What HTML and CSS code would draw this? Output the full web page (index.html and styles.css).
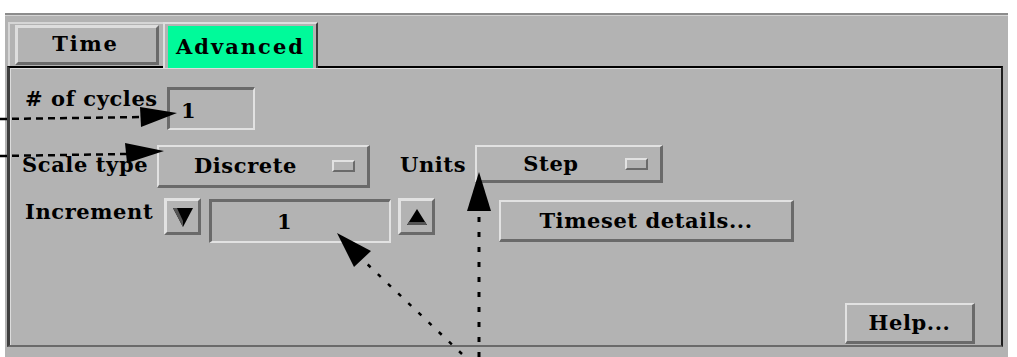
FILE: index.html
```html
<!DOCTYPE html>
<html lang="en">
<head>
  <meta charset="UTF-8" />
  <title>Time options - Advanced</title>
  <link rel="stylesheet" href="styles.css">
</head>
<body>

  <!-- Dialog window -->
  <div class="window">
    <div class="tabbar">
      <div class="tabs-frame">
        <div class="tab">Time</div>
      </div>
      <div class="tab-active"><span>Advanced</span></div>
    </div>

    <div class="panel">
      <div class="row row-cycles">
        <span class="label label-cycles"># of cycles</span>
        <div class="field field-cycles">1</div>
      </div>

      <div class="row row-scale">
        <span class="label label-scale">Scale type</span>
        <div class="option option-scale">
          <span class="option-text">Discrete</span>
          <span class="indicator"></span>
        </div>
        <span class="label label-units">Units</span>
        <div class="option option-units">
          <span class="option-text">Step</span>
          <span class="indicator"></span>
        </div>
      </div>

      <div class="row row-inc">
        <span class="label label-inc">Increment</span>
        <div class="arrow-btn">
          <svg width="22" height="22" viewBox="0 0 22 22">
            <polygon points="1,2 21,2 11,21" fill="#000" />
            <polygon points="1,2 5,2 11,15 11,21" fill="#555" />
          </svg>
        </div>
        <div class="field field-inc">1</div>
        <div class="arrow-btn arrow-up">
          <svg width="22" height="22" viewBox="0 0 22 22">
            <polygon points="11,3 21,19 1,19" fill="#000" />
            <polygon points="1,19 21,19 19,16 3,16" fill="#555" />
          </svg>
        </div>
        <div class="btn btn-timeset">Timeset details...</div>
      </div>

      <div class="footer">
        <div class="btn btn-help">Help...</div>
      </div>
    </div>
  </div>

  <!-- Callout arrows drawn over the dialog -->
  <svg class="callouts" width="1017" height="357" viewBox="0 0 1017 357">
    <g stroke="#000" fill="none">
      <line x1="0" y1="119" x2="142" y2="117" stroke-width="2.5" stroke-dasharray="7 5" />
      <line x1="0" y1="156" x2="127" y2="154" stroke-width="2.5" stroke-dasharray="7 5" />
      <line x1="479" y1="357" x2="479" y2="211" stroke-width="3" stroke-dasharray="5 10" />
      <line x1="462" y1="354" x2="364" y2="261" stroke-width="2.5" stroke-dasharray="4 10" />
    </g>
    <g fill="#000">
      <polygon points="140,107 177,113 141,127" />
      <polygon points="125,143 164,151 127,163" />
      <polygon points="479,172 491,211 467,211" />
      <polygon points="337,233 371,251 354,267" />
    </g>
  </svg>

</body>
</html>
```

FILE: styles.css
```css
body {
  margin: 0;
  background: #fff;
  font-family: "DejaVu Serif", serif;
  font-weight: bold;
  font-size: 21px;
  line-height: 24px;
  letter-spacing: 0.6px;
  color: #000;
  position: relative;
  width: 1017px;
  height: 357px;
  overflow: hidden;
}

/* Window */
.window {
  margin: 13px 0 0 5px;
  width: 1003px;
  height: 344px;
  box-sizing: border-box;
  background: #b3b3b3;
  border-top: 2px solid #8c8c8c;
  box-shadow: inset 0 1px #d4d4d4;
  display: flex;
  flex-direction: column;
}

/* Tabs */
.tabbar {
  display: flex;
  align-items: flex-end;
  padding: 7px 0 0 3px;
}

.tabs-frame {
  height: 44px;
  width: 155px;
  box-sizing: border-box;
  border-top: 2px solid #d6d6d6;
  border-left: 2px solid #d6d6d6;
  padding: 1px 0 0 5px;
}

.tab {
  width: 144px;
  height: 40px;
  box-sizing: border-box;
  border-style: solid;
  border-width: 3px;
  border-color: #dedede #6a6a6a #6a6a6a #dedede;
  display: flex;
  align-items: center;
  justify-content: center;
  padding: 0 3px 2px 0;
  letter-spacing: 1.8px;
}

.tab-active {
  width: 155px;
  height: 46px;
  margin-bottom: -2px;
  box-sizing: border-box;
  border-style: solid;
  border-width: 2px 2px 0 2px;
  border-color: #dedede #3c3c3c #dedede #dedede;
  padding: 2px 3px 0 3px;
  position: relative;
  z-index: 1;
  background: #b3b3b3;
  letter-spacing: 2px;
}

.tab-active span {
  display: flex;
  align-items: center;
  justify-content: center;
  height: 100%;
  padding-bottom: 1px;
  box-sizing: border-box;
  background: #00fa9a;
}

/* Panel */
.panel {
  margin-left: 2px;
  width: 996px;
  height: 281px;
  box-sizing: border-box;
  border-style: solid;
  border-width: 2px 2px 2px 3px;
  border-color: #000 #1e1e1e #6a6a6a #3e3e3e;
  box-shadow: inset 1px 1px #dcdcdc;
  padding: 19px 0 0 15px;
  display: flex;
  flex-direction: column;
}

.row {
  display: flex;
  align-items: flex-start;
}

.label {
  white-space: nowrap;
}

.label-cycles { width: 142px; margin-top: 0; }
.label-scale { width: 135px; margin: 8px 0 0 -3px; }
.label-units { width: 75px; margin: 8px 0 0 30px; }
.label-inc { width: 139px; margin-top: 2px; }

/* Sunken text fields */
.field {
  box-sizing: border-box;
  border-style: solid;
  border-width: 3px 2px 2px 3px;
  border-color: #6a6a6a #e2e2e2 #e2e2e2 #6a6a6a;
  display: flex;
  align-items: center;
}

.field-cycles {
  width: 88px;
  height: 43px;
  padding: 4px 0 0 11px;
}

.row-scale { margin-top: 15px; }
.row-inc { margin-top: 10px; }

.field-inc {
  width: 182px;
  height: 44px;
  margin: 1px 0 0 8px;
  justify-content: center;
  padding-right: 32px;
}

/* Raised widgets */
.option, .btn, .arrow-btn {
  box-sizing: border-box;
  border-style: solid;
  border-width: 2px 3px 3px 2px;
  border-color: #e2e2e2 #6a6a6a #6a6a6a #e2e2e2;
  display: flex;
  align-items: center;
}

.option-scale { width: 213px; height: 43px; }
.option-units { width: 188px; height: 38px; }

.option-text {
  flex: 1;
  text-align: center;
}

.indicator {
  width: 23px;
  height: 12px;
  box-sizing: border-box;
  border-style: solid;
  border-width: 2px;
  border-color: #e2e2e2 #6a6a6a #6a6a6a #e2e2e2;
  margin-right: 12px;
}

.arrow-btn {
  width: 37px;
  height: 37px;
  justify-content: center;
  border-width: 3px;
}

.arrow-btn svg { display: block; }

.arrow-up { margin-left: 7px; }

.btn {
  justify-content: center;
}

.btn-timeset {
  width: 295px;
  height: 42px;
  margin: 2px 0 0 64px;
}

.footer {
  margin-top: auto;
  display: flex;
  justify-content: flex-end;
  padding: 0 26px 1px 0;
}

.btn-help {
  width: 130px;
  height: 41px;
}

/* Annotation overlay */
.callouts {
  position: absolute;
  left: 0;
  top: 0;
  pointer-events: none;
}
```
